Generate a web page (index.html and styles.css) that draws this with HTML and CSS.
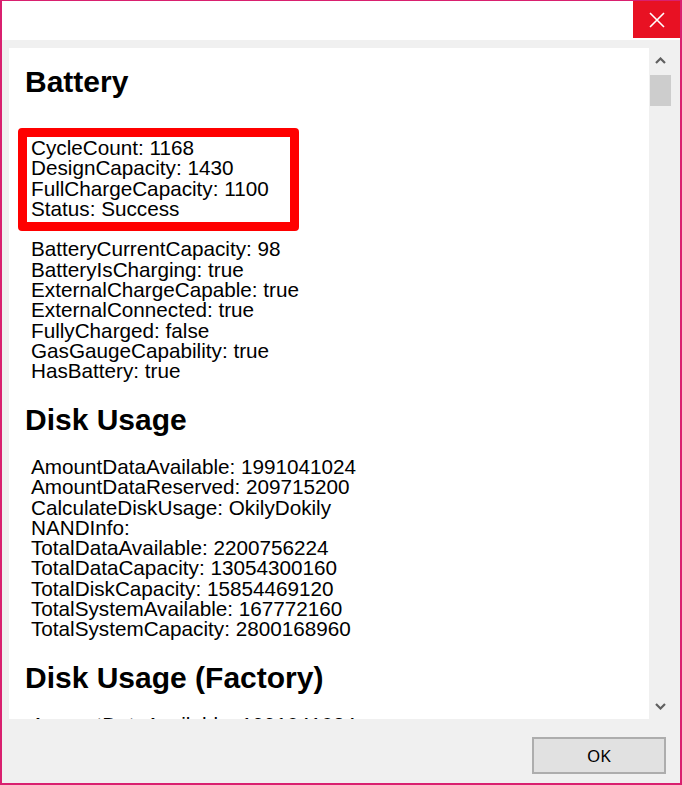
FILE: index.html
```html
<!DOCTYPE html>
<html lang="en">
<head>
    <meta charset="UTF-8">
    <meta name="viewport" content="width=device-width, initial-scale=1.0">
    <title>Device Info</title>
    <link rel="stylesheet" href="styles.css">
</head>
<body>
    <div class="window">
        <div class="titlebar">
            <button class="close" aria-label="Close">
                <svg width="16" height="16" viewBox="0 0 16 16">
                    <path d="M1 1 L15 15 M15 1 L1 15" stroke="#fff" stroke-width="1.6" fill="none"/>
                </svg>
            </button>
        </div>

        <div class="dialog">
            <div class="viewer">
                <div class="pane">
                    <h2>Battery</h2>
                    <div class="lines first">
                        <div>CycleCount: 1168</div>
                        <div>DesignCapacity: 1430</div>
                        <div>FullChargeCapacity: 1100</div>
                        <div>Status: Success</div>
                    </div>
                    <div class="lines gap">
                        <div>BatteryCurrentCapacity: 98</div>
                        <div>BatteryIsCharging: true</div>
                        <div>ExternalChargeCapable: true</div>
                        <div>ExternalConnected: true</div>
                        <div>FullyCharged: false</div>
                        <div>GasGaugeCapability: true</div>
                        <div>HasBattery: true</div>
                    </div>

                    <h2>Disk Usage</h2>
                    <div class="lines">
                        <div>AmountDataAvailable: 1991041024</div>
                        <div>AmountDataReserved: 209715200</div>
                        <div>CalculateDiskUsage: OkilyDokily</div>
                        <div>NANDInfo:</div>
                        <div>TotalDataAvailable: 2200756224</div>
                        <div>TotalDataCapacity: 13054300160</div>
                        <div>TotalDiskCapacity: 15854469120</div>
                        <div>TotalSystemAvailable: 167772160</div>
                        <div>TotalSystemCapacity: 2800168960</div>
                    </div>

                    <h2>Disk Usage (Factory)</h2>
                    <div class="lines">
                        <div>AmountDataAvailable: 1991041024</div>
                    </div>

                    <div class="highlight"></div>
                </div>

                <div class="scrollbar">
                    <div class="arrow">
                        <svg width="11" height="7" viewBox="0 0 11 7">
                            <path d="M1 6 L5.5 1.5 L10 6" stroke="#606060" stroke-width="2.2" fill="none"/>
                        </svg>
                    </div>
                    <div class="thumb"></div>
                    <div class="track"></div>
                    <div class="arrow">
                        <svg width="11" height="7" viewBox="0 0 11 7">
                            <path d="M1 1 L5.5 5.5 L10 1" stroke="#606060" stroke-width="2.2" fill="none"/>
                        </svg>
                    </div>
                </div>
            </div>

            <div class="footer">
                <button class="ok">OK</button>
            </div>
        </div>
    </div>
</body>
</html>
```

FILE: styles.css
```css
/* Global Styles */
body {
    margin: 0;
    padding: 0;
    background-color: #f0f0f0;
    color: #000;
    font-family: "Liberation Sans", Arial, sans-serif;
}

.window {
    width: 682px;
    height: 785px;
    box-sizing: border-box;
    border: 2px solid #d9206f;
    border-top-width: 1px;
    display: flex;
    flex-direction: column;
    overflow: hidden;
}

/* Title bar */
.titlebar {
    height: 39px;
    background-color: #fff;
    display: flex;
    justify-content: flex-end;
    align-items: flex-start;
}

.close {
    width: 48px;
    height: 37px;
    margin-right: -1px;
    border: none;
    padding: 0;
    background-color: #e81123;
    display: flex;
    align-items: center;
    justify-content: center;
}

/* Dialog body */
.dialog {
    flex: 1;
    background-color: #f0f0f0;
    padding: 8px 8px 0 7px;
    display: flex;
    flex-direction: column;
}

.viewer {
    height: 671px;
    display: flex;
}

.pane {
    flex: 1;
    position: relative;
    background-color: #fff;
    padding: 17px 0 0 16px;
    overflow: hidden;
}

.pane h2 {
    margin: 21.2px 0 0 0;
    font-size: 30px;
    line-height: 34px;
    font-weight: bold;
}

.pane h2:first-child {
    margin-top: 0;
}

.lines {
    margin-top: 20.2px;
    padding-left: 6px;
    font-size: 20.7px;
    line-height: 20.3px;
    white-space: nowrap;
}

.lines.first {
    margin-top: 39px;
}

.lines.gap {
    margin-top: 20.3px;
}

/* red annotation drawn over the first lines */
.highlight {
    position: absolute;
    left: 9px;
    top: 80px;
    width: 263px;
    height: 85px;
    border: 9px solid #ff0000;
    border-radius: 4px;
}

/* Scrollbar */
.scrollbar {
    width: 23px;
    display: flex;
    flex-direction: column;
    background-color: #f0f0f0;
}

.arrow {
    height: 25px;
    display: flex;
    align-items: center;
    justify-content: center;
}

.thumb {
    height: 31px;
    margin: 2px 1px 0 1px;
    background-color: #cdcdcd;
}

.track {
    flex: 1;
}

/* Footer */
.footer {
    display: flex;
    justify-content: flex-end;
    padding: 18px 6px 0 0;
}

.ok {
    width: 134px;
    height: 37px;
    box-sizing: border-box;
    border: 2px solid #adadad;
    background-color: #e1e1e1;
    font-family: "Noto Sans", "Open Sans", sans-serif;
    font-size: 17px;
    color: #000;
    padding: 0;
}
```
